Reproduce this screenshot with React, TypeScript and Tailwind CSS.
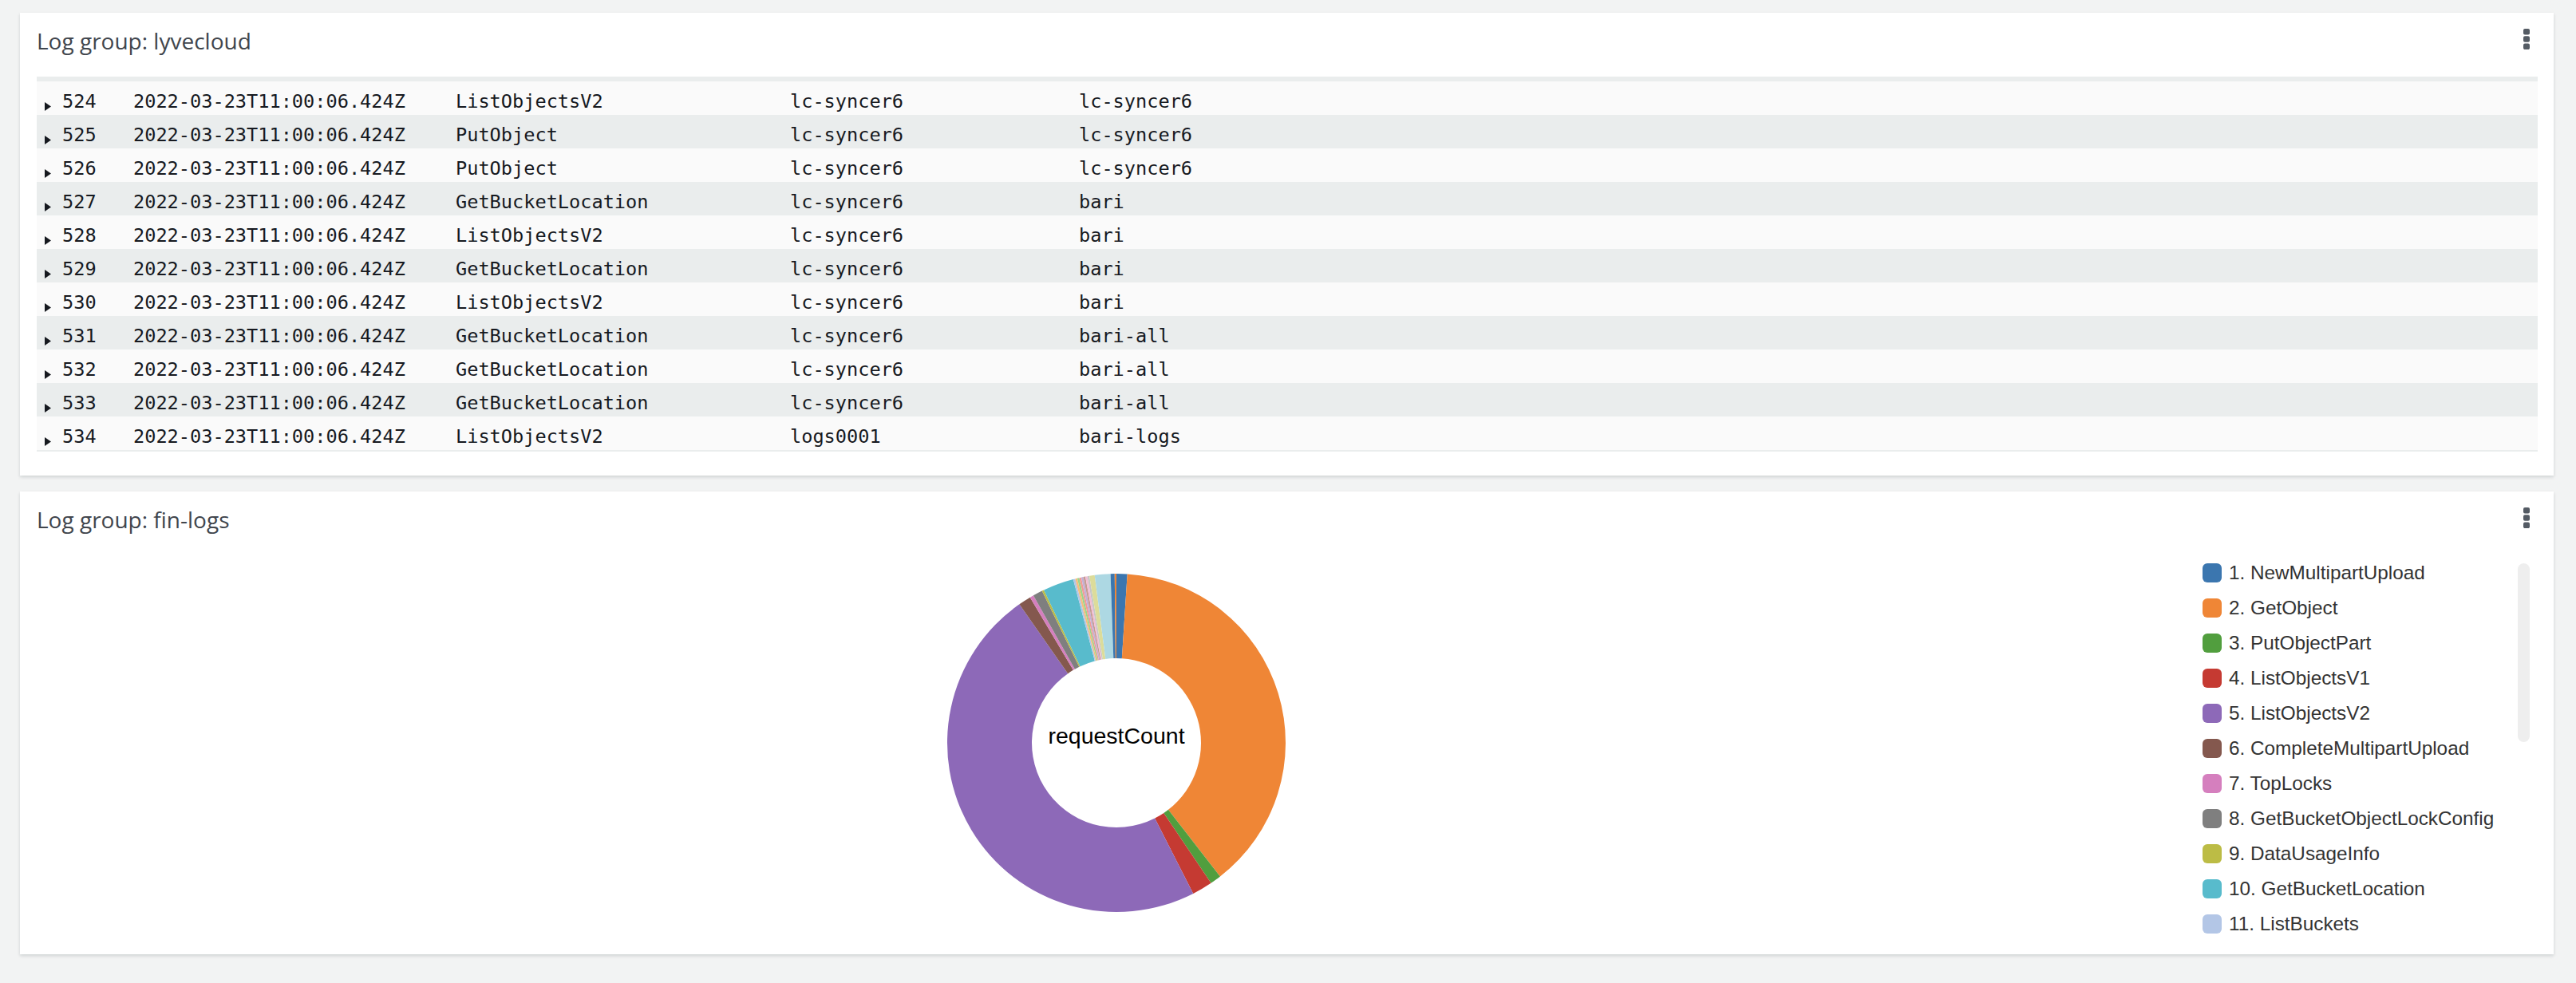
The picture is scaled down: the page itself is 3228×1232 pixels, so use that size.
import React from "react";

const rows: [string, string, string, string][] = [
  ["524", "ListObjectsV2", "lc-syncer6", "lc-syncer6"],
  ["525", "PutObject", "lc-syncer6", "lc-syncer6"],
  ["526", "PutObject", "lc-syncer6", "lc-syncer6"],
  ["527", "GetBucketLocation", "lc-syncer6", "bari"],
  ["528", "ListObjectsV2", "lc-syncer6", "bari"],
  ["529", "GetBucketLocation", "lc-syncer6", "bari"],
  ["530", "ListObjectsV2", "lc-syncer6", "bari"],
  ["531", "GetBucketLocation", "lc-syncer6", "bari-all"],
  ["532", "GetBucketLocation", "lc-syncer6", "bari-all"],
  ["533", "GetBucketLocation", "lc-syncer6", "bari-all"],
  ["534", "ListObjectsV2", "logs0001", "bari-logs"],
];

const legend: [string, string][] = [
  ["1. NewMultipartUpload", "#3b76af"],
  ["2. GetObject", "#ef8636"],
  ["3. PutObjectPart", "#519e3e"],
  ["4. ListObjectsV1", "#c53a32"],
  ["5. ListObjectsV2", "#8d69b8"],
  ["6. CompleteMultipartUpload", "#84584e"],
  ["7. TopLocks", "#d57fbe"],
  ["8. GetBucketObjectLockConfig", "#7f7f7f"],
  ["9. DataUsageInfo", "#bcbc45"],
  ["10. GetBucketLocation", "#58bbcc"],
  ["11. ListBuckets", "#b3c6e6"],
];

const slices: [number, number, string][] = [
  [0, 3.7, "#3b76af"],
  [3.7, 142.2, "#ef8636"],
  [142.2, 146, "#519e3e"],
  [146, 153, "#c53a32"],
  [153, 325, "#8d69b8"],
  [325, 329.3, "#84584e"],
  [329.3, 330.6, "#d57fbe"],
  [330.6, 333.9, "#7f7f7f"],
  [333.9, 334.6, "#bcbc45"],
  [334.6, 345.2, "#58bbcc"],
  [345.2, 345.9, "#b3c6e6"],
  [345.9, 346.6, "#f6bd7d"],
  [346.6, 347.3, "#9ed58a"],
  [347.3, 348.0, "#f09b98"],
  [348.0, 348.7, "#c4b0d5"],
  [348.7, 349.4, "#c49c94"],
  [349.4, 350.1, "#f3bcd4"],
  [350.1, 350.8, "#c7c7c7"],
  [350.8, 352.6, "#dcdc9a"],
  [352.6, 358.0, "#add8e3"],
  [358.0, 359.4, "#3b76af"],
  [359.4, 360, "#ef8636"],
];

function pt(cx: number, cy: number, r: number, deg: number) {
  const a = (deg * Math.PI) / 180;
  return [cx + r * Math.sin(a), cy - r * Math.cos(a)];
}

function arcPath(cx: number, cy: number, ro: number, ri: number, a0: number, a1: number) {
  const large = a1 - a0 > 180 ? 1 : 0;
  const [x0, y0] = pt(cx, cy, ro, a0);
  const [x1, y1] = pt(cx, cy, ro, a1);
  const [x2, y2] = pt(cx, cy, ri, a1);
  const [x3, y3] = pt(cx, cy, ri, a0);
  return `M${x0} ${y0} A${ro} ${ro} 0 ${large} 1 ${x1} ${y1} L${x2} ${y2} A${ri} ${ri} 0 ${large} 0 ${x3} ${y3} Z`;
}

function Kebab() {
  return (
    <svg width="8" height="26" viewBox="0 0 8 26" className="mt-[3px] mr-[10px] shrink-0">
      <rect x="0" y="0" width="8" height="7.5" rx="2" fill="#545b64" />
      <rect x="0" y="9.3" width="8" height="7.5" rx="2" fill="#545b64" />
      <rect x="0" y="18.6" width="8" height="7.5" rx="2" fill="#545b64" />
    </svg>
  );
}

function Title({ text }: { text: string }) {
  return (
    <div className="flex items-start justify-between">
      <div
        className="text-[28px] leading-[37px] text-[#41464d]"
        style={{ fontFamily: '"Open Sans", "Noto Sans", sans-serif' }}
      >
        {text}
      </div>
      <Kebab />
    </div>
  );
}

export default function App() {
  const cx = 1353;
  const cy = 251;
  return (
    <div className="h-[1232px] w-[3228px] overflow-hidden bg-[#f2f3f3] pl-[25px] pr-[28px] pt-[16px]">
      <div className="flex flex-col gap-[20px]">
        {/* Card 1 */}
        <div className="h-[580px] bg-white pl-[21px] pr-[20px] pt-[17px] shadow-[0_2px_4px_0_rgba(0,28,36,0.15)]">
          <Title text="Log group: lyvecloud" />
          <div className="mt-[26px]">
            <div className="h-[6px] bg-[#eaeded]" />
            {rows.map((r, i) => (
              <div
                key={r[0]}
                className={
                  "grid h-[42px] grid-cols-[32px_89px_404px_419px_362px_1fr] text-[23.6px] text-[#16191f] " +
                  (i % 2 === 0 ? "bg-[#fafafa]" : "bg-[#eaeded]")
                }
                style={{ fontFamily: '"DejaVu Sans Mono", monospace' }}
              >
                <div className="pl-[10px] pt-[26px]">
                  <svg width="8" height="11" viewBox="0 0 8 11">
                    <polygon points="0,0 8,5.5 0,11" fill="#16191f" />
                  </svg>
                </div>
                <div className="pt-[8px] leading-[34px]">{r[0]}</div>
                <div className="pt-[8px] leading-[34px]">2022-03-23T11:00:06.424Z</div>
                <div className="pt-[8px] leading-[34px]">{r[1]}</div>
                <div className="pt-[8px] leading-[34px]">{r[2]}</div>
                <div className="pt-[8px] leading-[34px]">{r[3]}</div>
              </div>
            ))}
            <div className="h-[2px] bg-[#eaeded]" />
          </div>
        </div>

        {/* Card 2 */}
        <div className="h-[580px] bg-white pl-[21px] pr-[20px] pt-[17px] shadow-[0_2px_4px_0_rgba(0,28,36,0.15)]">
          <Title text="Log group: fin-logs" />
          <div className="mt-[10px] flex h-[502px]">
            <div className="flex-1">
              <svg width="2706" height="502" viewBox="0 0 2706 502">
                {slices.map(([a0, a1, c], i) => (
                  <path key={i} d={arcPath(cx, cy, 212, 106, a0, a1)} fill={c} />
                ))}
                <text
                  x={cx}
                  y={cy + 1}
                  textAnchor="middle"
                  fontSize="28.5"
                  fill="#000"
                  style={{ fontFamily: '"Liberation Sans", Arial, sans-serif' }}
                >
                  requestCount
                </text>
              </svg>
            </div>
            <div className="flex w-[428px] pl-[8px] pt-[16px]">
              <div className="flex h-[484px] w-[395px] flex-col overflow-hidden">
                {legend.map(([label, color]) => (
                  <div key={label} className="flex h-[44px] shrink-0 items-center gap-[9px]">
                    <div className="h-[24px] w-[24px] shrink-0 rounded-[6px]" style={{ backgroundColor: color }} />
                    <div
                      className="whitespace-nowrap text-[24.3px] text-[#333333]"
                      style={{ fontFamily: '"Liberation Sans", Arial, sans-serif' }}
                    >
                      {label}
                    </div>
                  </div>
                ))}
              </div>
              <div className="mt-[10px] h-[224px] w-[15px] rounded-full bg-[#eeeeee]" />
            </div>
          </div>
        </div>
      </div>
    </div>
  );
}
